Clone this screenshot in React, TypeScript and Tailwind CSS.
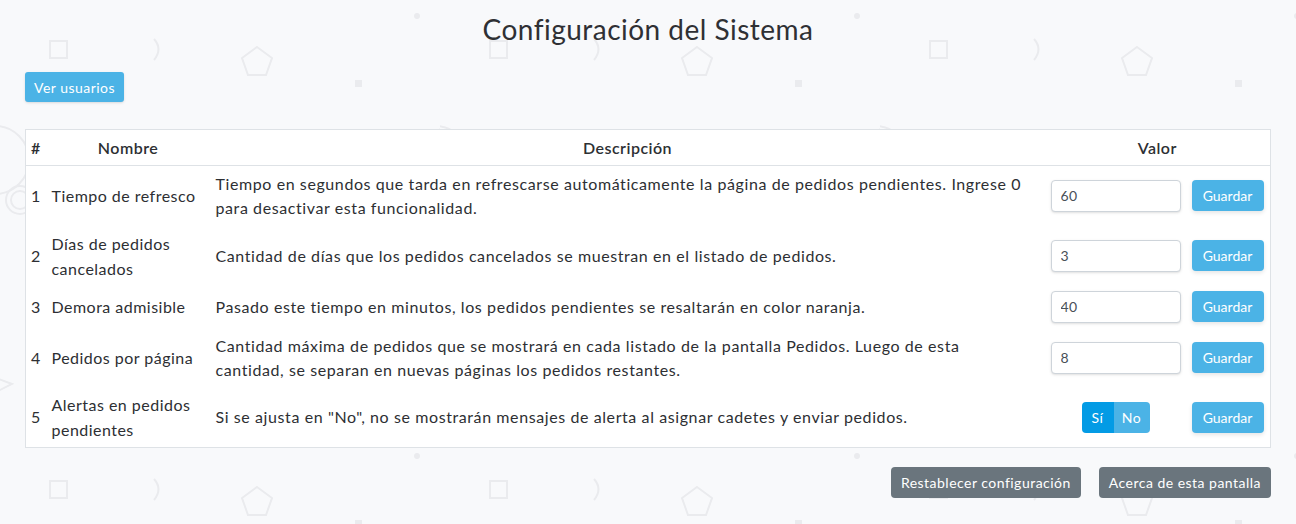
import React from 'react';

const rows = [
  { id: 1, name: 'Tiempo de refresco', desc: 'Tiempo en segundos que tarda en refrescarse automáticamente la página de pedidos pendientes. Ingrese 0 para desactivar esta funcionalidad.', value: '60', h: 'h-[60px]' },
  { id: 2, name: 'Días de pedidos cancelados', desc: 'Cantidad de días que los pedidos cancelados se muestran en el listado de pedidos.', value: '3', h: 'h-[60px]' },
  { id: 3, name: 'Demora admisible', desc: 'Pasado este tiempo en minutos, los pedidos pendientes se resaltarán en color naranja.', value: '40', h: 'h-[42px]' },
  { id: 4, name: 'Pedidos por página', desc: 'Cantidad máxima de pedidos que se mostrará en cada listado de la pantalla Pedidos. Luego de esta cantidad, se separan en nuevas páginas los pedidos restantes.', value: '8', h: 'h-[60px]' },
  { id: 5, name: 'Alertas en pedidos pendientes', desc: 'Si se ajusta en "No", no se mostrarán mensajes de alerta al asignar cadetes y enviar pedidos.', value: null, h: 'h-[60px]' },
];

const Pattern = () => (
  <svg className="absolute inset-0 w-full h-full" aria-hidden="true">
    <defs>
      <pattern id="bgtile" x="0" y="0" width="440" height="440" patternUnits="userSpaceOnUse">
        <g fill="none" stroke="#eaebee" strokeWidth="2">
          <rect x="50" y="41" width="17" height="17" />
          <path d="M154 39 Q163 49 154 60" />
          <path d="M257 47 L272 58 L266 75 L248 75 L242 58 Z" />
          <circle cx="20" cy="200" r="14" />
          <circle cx="20" cy="200" r="9" />
          <circle cx="455" cy="160" r="34" />
          <circle cx="-5" cy="160" r="34" />
          <path d="M-4 378 L12 384 L-4 392" />
        </g>
        <rect x="355" y="80" width="7" height="7" fill="#eaebee" />
        <circle cx="417" cy="16" r="3" fill="#eaebee" />
      </pattern>
    </defs>
    <rect width="100%" height="100%" fill="url(#bgtile)" />
  </svg>
);

export default function App() {
  return (
    <div className="relative min-h-[524px] w-full bg-[#f8f9fb] text-[#2d2f33] tracking-[0.03em] font-['Lato','Liberation_Sans',sans-serif] overflow-hidden">
      <Pattern />
      <div className="relative px-[25px]">
        <h1 className="pt-[12px] text-center text-[28px] leading-[34px] text-[#2f3034]">Configuración del Sistema</h1>

        <div className="mt-[26px]">
          <button className="h-[30px] px-[9px] rounded-[3px] bg-[#4bb3e6] text-white text-[14px] shadow-sm">Ver usuarios</button>
        </div>

        <table className="mt-[27px] w-full border border-[#dee2e6] bg-white text-[16px] border-collapse">
          <thead>
            <tr className="h-[36px] border-b border-[#dee2e6]">
              <th className="w-[20px] pl-[5px] text-left font-semibold">#</th>
              <th className="w-[165px] font-semibold">Nombre</th>
              <th className="font-semibold">Descripción</th>
              <th colSpan={2} className="w-[226px] font-semibold">Valor</th>
            </tr>
          </thead>
          <tbody>
            {rows.map((r) => (
              <tr key={r.id} className={r.h}>
                <td className="pl-[5px] align-middle">{r.id}</td>
                <td className="px-[6px] leading-[25px] align-middle">{r.name}</td>
                <td className="px-[5px] leading-[24px] tracking-[0.037em] align-middle">
                  <div className="max-w-[812px]">{r.desc}</div>
                </td>
                <td className="w-[142px] px-[6px] align-middle">
                  {r.value !== null ? (
                    <input
                      readOnly
                      value={r.value}
                      className="w-[130px] h-[32px] px-[9px] text-[14px] text-[#495057] bg-white border border-[#ced4da] rounded-[4px] shadow-sm outline-none"
                    />
                  ) : (
                    <div className="flex justify-center">
                      <div className="flex h-[31px] rounded-[4px] overflow-hidden text-[14px] text-white">
                        <button className="w-[32px] bg-[#039be5]">Sí</button>
                        <button className="w-[36px] bg-[#4bb3e6]">No</button>
                      </div>
                    </div>
                  )}
                </td>
                <td className="w-[84px] pl-[5px] pr-[6px] align-middle">
                  <button className="w-[72px] h-[31px] rounded-[4px] bg-[#4bb3e6] text-white text-[14px] tracking-normal shadow-[0_2px_4px_rgba(0,0,0,0.1)]">Guardar</button>
                </td>
              </tr>
            ))}
          </tbody>
        </table>

        <div className="mt-[19px] flex justify-end gap-[18px]">
          <button className="h-[31px] px-[10px] rounded-[4px] bg-[#6a757d] text-white text-[14px]">Restablecer configuración</button>
          <button className="h-[31px] px-[10px] rounded-[4px] bg-[#6a757d] text-white text-[14px]">Acerca de esta pantalla</button>
        </div>
      </div>
    </div>
  );
}
